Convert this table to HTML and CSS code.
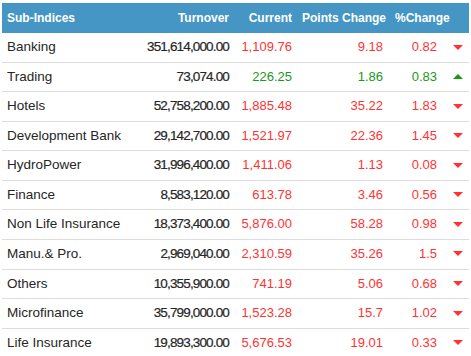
FILE: index.html
```html
<!DOCTYPE html>
<html lang="en">
<head>
  <meta charset="UTF-8" />
  <title>Sub-Indices</title>
  <link rel="stylesheet" href="styles.css">
</head>
<body>
  <div class="wrap">
    <table class="indices">
      <colgroup>
        <col class="c-name">
        <col class="c-turnover">
        <col class="c-current">
        <col class="c-points">
        <col class="c-pct">
        <col class="c-arrow">
      </colgroup>
      <thead>
        <tr>
          <th class="left">Sub-Indices</th>
          <th>Turnover</th>
          <th>Current</th>
          <th>Points Change</th>
          <th class="left pct" colspan="2">%Change</th>
        </tr>
      </thead>
      <tbody>
        <tr class="down"><td>Banking</td><td class="turnover">351,614,000.00</td><td>1,109.76</td><td>9.18</td><td>0.82</td><td class="dir"><span class="arrow"></span></td></tr>
        <tr class="up"><td>Trading</td><td class="turnover">73,074.00</td><td>226.25</td><td>1.86</td><td>0.83</td><td class="dir"><span class="arrow"></span></td></tr>
        <tr class="down"><td>Hotels</td><td class="turnover">52,758,200.00</td><td>1,885.48</td><td>35.22</td><td>1.83</td><td class="dir"><span class="arrow"></span></td></tr>
        <tr class="down"><td>Development Bank</td><td class="turnover">29,142,700.00</td><td>1,521.97</td><td>22.36</td><td>1.45</td><td class="dir"><span class="arrow"></span></td></tr>
        <tr class="down"><td>HydroPower</td><td class="turnover">31,996,400.00</td><td>1,411.06</td><td>1.13</td><td>0.08</td><td class="dir"><span class="arrow"></span></td></tr>
        <tr class="down"><td>Finance</td><td class="turnover">8,583,120.00</td><td>613.78</td><td>3.46</td><td>0.56</td><td class="dir"><span class="arrow"></span></td></tr>
        <tr class="down"><td>Non Life Insurance</td><td class="turnover">18,373,400.00</td><td>5,876.00</td><td>58.28</td><td>0.98</td><td class="dir"><span class="arrow"></span></td></tr>
        <tr class="down"><td>Manu.&amp; Pro.</td><td class="turnover">2,969,040.00</td><td>2,310.59</td><td>35.26</td><td>1.5</td><td class="dir"><span class="arrow"></span></td></tr>
        <tr class="down"><td>Others</td><td class="turnover">10,355,900.00</td><td>741.19</td><td>5.06</td><td>0.68</td><td class="dir"><span class="arrow"></span></td></tr>
        <tr class="down"><td>Microfinance</td><td class="turnover">35,799,000.00</td><td>1,523.28</td><td>15.7</td><td>1.02</td><td class="dir"><span class="arrow"></span></td></tr>
        <tr class="down"><td>Life Insurance</td><td class="turnover">19,893,300.00</td><td>5,676.53</td><td>19.01</td><td>0.33</td><td class="dir"><span class="arrow"></span></td></tr>
      </tbody>
    </table>
  </div>
</body>
</html>
```

FILE: styles.css
```css
:root {
  --head-bg: #4596c4;
  --text: #262626;
  --red: #ff3333;
  --green: #1a9a1a;
  --line: #dddddd;
}

body {
  margin: 0;
  background: #fff;
  font-family: 'Liberation Sans', Arial, sans-serif;
  color: var(--text);
}

.wrap {
  padding: 3px 2px;
}

.indices {
  width: 467px;
  table-layout: fixed;
  border-collapse: collapse;
  font-size: 13px;
  line-height: 18.57px;
}

.c-name { width: 130px; }
.c-turnover { width: 102px; }
.c-current { width: 63px; }
.c-points { width: 91px; }
.c-pct { width: 54px; }
.c-arrow { width: 27px; }

.indices th {
  background: var(--head-bg);
  color: #fff;
  font-size: 12px;
  font-weight: bold;
  text-align: right;
  padding: 5px;
  height: 30px;
  box-sizing: border-box;
  white-space: nowrap;
}

.indices th.left {
  text-align: left;
}

.indices th.pct {
  padding-left: 7px;
}

.indices td {
  padding: 5px;
  text-align: right;
  border-top: 1px solid var(--line);
  white-space: nowrap;
}

.indices tbody tr:first-child td {
  border-top: none;
}

.indices td:first-child {
  text-align: left;
  font-size: 13.5px;
}

.indices td.turnover {
  letter-spacing: -0.85px;
  font-size: 13.5px;
  -webkit-text-stroke: 0.2px var(--text);
}

.indices td.dir {
  padding-right: 5px;
  font-size: 0;
}

.down td { color: var(--red); }
.up td { color: var(--green); }
.indices tr td:first-child,
.indices tr td.turnover { color: var(--text); }

.arrow {
  display: inline-block;
  width: 0;
  height: 0;
  border-left: 5px solid transparent;
  border-right: 5px solid transparent;
  margin-right: 1px;
  vertical-align: middle;
}

.down .arrow { border-top: 5px solid var(--red); }
.up .arrow { border-bottom: 5px solid var(--green); }
```
